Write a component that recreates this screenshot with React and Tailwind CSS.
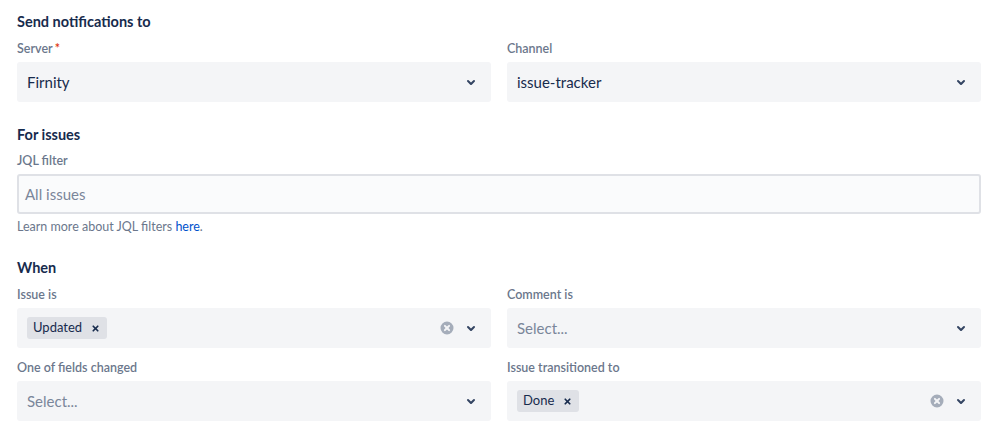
import { X } from "lucide-react";

const font = { fontFamily: 'Lato, "Noto Sans", sans-serif' };

function Chevron() {
  return (
    <svg width="24" height="24" viewBox="0 0 24 24" className="text-[#344563]">
      <path
        d="M8.292 10.293a1.009 1.009 0 000 1.419l2.939 2.965c.218.215.5.322.779.322s.556-.107.769-.322l2.93-2.955a1.01 1.01 0 000-1.419.987.987 0 00-1.406 0l-2.298 2.317-2.307-2.327a.99.99 0 00-1.406 0z"
        fill="currentColor"
      />
    </svg>
  );
}

function ClearIcon() {
  return (
    <svg width="24" height="24" viewBox="0 0 24 24" className="text-[#a5adba]">
      <path
        d="M12 18.5a6.5 6.5 0 100-13 6.5 6.5 0 000 13zm1.414-6.5l1.414 1.414a1 1 0 01-1.414 1.414L12 13.414l-1.414 1.414a1 1 0 01-1.414-1.414L10.586 12l-1.414-1.414a1 1 0 011.414-1.414L12 10.586l1.414-1.414a1 1 0 011.414 1.414L13.414 12z"
        fill="currentColor"
      />
    </svg>
  );
}

function Heading({ children, className = "" }) {
  return (
    <h2 className={`text-[14.5px] font-bold text-[#172b4d] leading-5 ${className}`}>
      {children}
    </h2>
  );
}

function Label({ children, required }) {
  return (
    <div className="text-[12.5px] font-semibold text-[#6b778c] leading-4 mb-[5px] mt-[1px]">
      {children}
      {required && <span className="text-[#de350b] ml-[2px]">*</span>}
    </div>
  );
}

function Tag({ children }) {
  return (
    <span className="inline-flex items-center h-[22px] bg-[#dfe1e6] rounded-[3px] pl-[6px] pr-[4px] text-[13px] text-[#172b4d]">
      {children}
      <X className="w-[9px] h-[9px] ml-[9px] mr-[3px]" strokeWidth={4.5} />
    </span>
  );
}

function Select({ value, placeholder, tags, clearable }) {
  return (
    <div className="h-10 bg-[#f4f5f7] rounded-[3px] flex items-center pl-[10px] pr-[8px]">
      <div className="flex-1 flex items-center gap-1 text-[15px]">
        {tags && tags.map((t) => <Tag key={t}>{t}</Tag>)}
        {value && <span className="text-[#172b4d]">{value}</span>}
        {placeholder && <span className="text-[#7a869a]">{placeholder}</span>}
      </div>
      {clearable && <ClearIcon />}
      <Chevron />
    </div>
  );
}

function Field({ label, required, children }) {
  return (
    <div>
      <Label required={required}>{label}</Label>
      {children}
    </div>
  );
}

export default function App() {
  return (
    <div className="w-[999px] h-[436px] bg-white pl-[17px] pr-[18px] pt-[12px]" style={font}>
      <Heading>Send notifications to</Heading>
      <div className="grid grid-cols-2 gap-x-4 mt-[8px]">
        <Field label="Server" required>
          <Select value="Firnity" />
        </Field>
        <Field label="Channel">
          <Select value="issue-tracker" />
        </Field>
      </div>

      <Heading className="mt-[23px]">For issues</Heading>
      <div className="mt-[8px]">
        <Label>JQL filter</Label>
        <div className="h-10 bg-[#fafbfc] border-2 border-[#dfe1e6] rounded-[3px] flex items-center px-[6px] text-[15px] text-[#7a869a]">
          All issues
        </div>
        <div className="text-[12.5px] text-[#6b778c] mt-[5px] leading-4">
          Learn more about JQL filters <span className="text-[#0052cc]">here</span>.
        </div>
      </div>

      <Heading className="mt-[23px]">When</Heading>
      <div className="grid grid-cols-2 gap-x-4 gap-y-[11px] mt-[8px]">
        <Field label="Issue is">
          <Select tags={["Updated"]} clearable />
        </Field>
        <Field label="Comment is">
          <Select placeholder="Select..." />
        </Field>
        <Field label="One of fields changed">
          <Select placeholder="Select..." />
        </Field>
        <Field label="Issue transitioned to">
          <Select tags={["Done"]} clearable />
        </Field>
      </div>
    </div>
  );
}
